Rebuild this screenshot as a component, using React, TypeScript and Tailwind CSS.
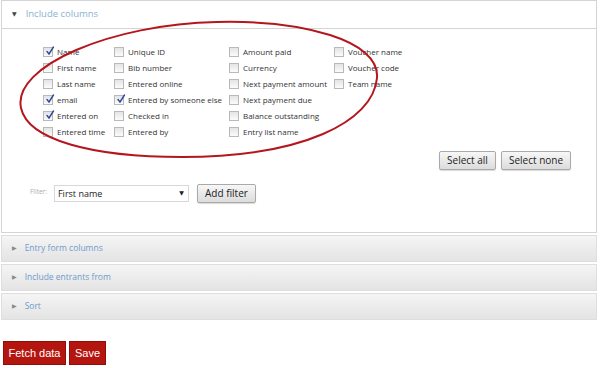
const COLUMNS: { label: string; checked?: boolean }[][] = [
  [
    { label: "Name", checked: true },
    { label: "First name" },
    { label: "Last name" },
    { label: "email", checked: true },
    { label: "Entered on", checked: true },
    { label: "Entered time" },
  ],
  [
    { label: "Unique ID" },
    { label: "Bib number" },
    { label: "Entered online" },
    { label: "Entered by someone else", checked: true },
    { label: "Checked in" },
    { label: "Entered by" },
  ],
  [
    { label: "Amount paid" },
    { label: "Currency" },
    { label: "Next payment amount" },
    { label: "Next payment due" },
    { label: "Balance outstanding" },
    { label: "Entry list name" },
  ],
  [{ label: "Voucher name" }, { label: "Voucher code" }, { label: "Team name" }],
];

const COL_WIDTHS = ["w-[71px]", "w-[115px]", "w-[105px]", "w-[100px]"];

function Check({ checked }: { checked?: boolean }) {
  return (
    <span className="relative flex h-[10px] w-[10px] shrink-0 items-center justify-center border border-[#b9b9b9] bg-gradient-to-b from-[#e4e4e4] to-[#fbfbfb]">
      {checked && (
        <svg aria-hidden viewBox="0 0 10 10" className="absolute left-[1px] top-[-2px] h-[10px] w-[10px]">
          <path d="M2 5.5 L4 8 L8.5 1" fill="none" stroke="#2c4a9c" strokeWidth="1.4" strokeLinecap="round" />
        </svg>
      )}
    </span>
  );
}

function GrayButton({ children, className = "" }: { children: React.ReactNode; className?: string }) {
  return (
    <button
      type="button"
      className={
        "flex items-center justify-center rounded-[2px] border border-[#a9a9a9] bg-gradient-to-b from-[#f7f7f7] to-[#dcdcdc] text-[10px] text-[#222] shadow-[0_1px_1px_rgba(0,0,0,0.15)] " +
        className
      }
    >
      {children}
    </button>
  );
}

function CollapsedBar({ label }: { label: string }) {
  return (
    <div className="flex h-[27px] items-center border border-[#dedede] bg-gradient-to-b from-[#f5f5f5] via-[#ececec] to-[#e4e4e4]">
      <span className="ml-[10px] text-[6px] text-[#888]">▶</span>
      <span className="ml-[8px] text-[8.5px] text-[#6f9bcc]">{label}</span>
    </div>
  );
}

export default function App() {
  return (
    <div className="relative h-[368px] w-[600px] overflow-hidden bg-white font-['Open_Sans','DejaVu_Sans',sans-serif]">
      <div className="ml-[1px] mr-[3px] border border-[#d4d4d4]">
        <div className="flex h-[28px] items-center border-b border-[#d4d4d4]">
          <span className="ml-[10px] text-[6px] text-[#444]">▼</span>
          <span className="ml-[9px] text-[9.5px] text-[#8bb2cf]">Include columns</span>
        </div>

        <div className="relative h-[203px]">
          <div className="flex pl-[41px] pt-[15px]">
            {COLUMNS.map((col, i) => (
              <div key={i} className={"flex flex-col " + COL_WIDTHS[i]}>
                {col.map((item) => (
                  <div key={item.label} className="flex h-[16px] items-center gap-[4px]">
                    <Check checked={item.checked} />
                    <span className="whitespace-nowrap text-[8px] text-[#333]">{item.label}</span>
                  </div>
                ))}
              </div>
            ))}
          </div>

          <div className="mr-[25px] mt-[11px] flex justify-end gap-[5px]">
            <GrayButton className="h-[19px] w-[57px]">Select all</GrayButton>
            <GrayButton className="h-[19px] w-[70px]">Select none</GrayButton>
          </div>

          <div className="ml-[28px] mt-[14px] flex items-start">
            <span className="mt-[3px] text-[6.5px] text-[#aaa]">Filter:</span>
            <div className="ml-[7px] mt-[1px] flex h-[17px] w-[135px] items-center justify-between border border-[#d8d8d8] bg-white pl-[3px] pr-[4px]">
              <span className="text-[9px] text-[#222]">First name</span>
              <span className="text-[6px] text-[#222]">▼</span>
            </div>
            <GrayButton className="ml-[8px] h-[19px] w-[59px]">Add filter</GrayButton>
          </div>

          <svg
            aria-hidden
            viewBox="0 0 400 203"
            className="pointer-events-none absolute left-0 top-[-29px] h-[203px] w-[400px] overflow-visible"
          >
            <path
              d="M 19 108 C 10 66, 110 24, 215 22 C 300 20, 378 40, 375 78 C 371 122, 300 157, 180 157 C 90 157, 26 140, 19 108 Z"
              fill="none"
              stroke="#b5161d"
              strokeWidth="2"
            />
          </svg>
        </div>
      </div>

      <div className="ml-[1px] mr-[3px] mt-[2px] flex flex-col gap-[2px]">
        <CollapsedBar label="Entry form columns" />
        <CollapsedBar label="Include entrants from" />
        <CollapsedBar label="Sort" />
      </div>

      <div className="ml-[3px] mt-[21px] flex gap-[3px] font-['Liberation_Sans',Arial,sans-serif]">
        <button type="button" className="h-[24px] w-[63px] border border-[#8e0e0a] bg-[#b5150f] text-[11px] text-white">
          Fetch data
        </button>
        <button type="button" className="h-[24px] w-[37px] border border-[#8e0e0a] bg-[#b5150f] text-[11px] text-white">
          Save
        </button>
      </div>
    </div>
  );
}
